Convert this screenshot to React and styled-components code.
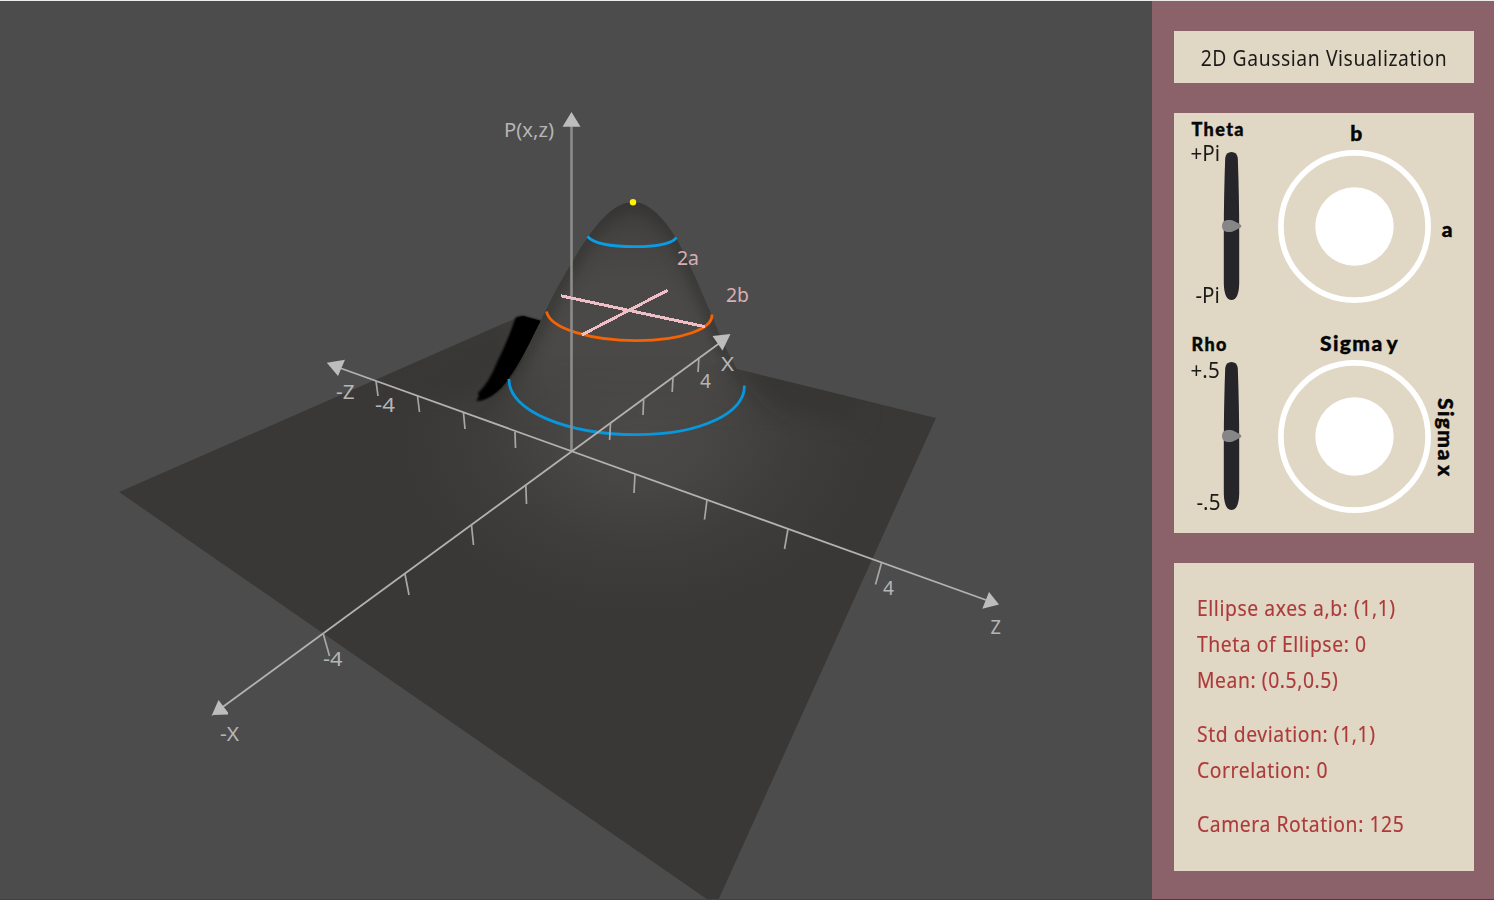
import React from "react";
import styled, { createGlobalStyle } from "styled-components";

const Global = createGlobalStyle`
  * { box-sizing: border-box; }
  body { margin: 0; background: #4c4c4c; overflow: hidden; }
`;

const ink = "#bdbdbd";

const Page = styled.div`
  display: flex;
  width: 1494px;
  height: 900px;
  border-top: 1px solid #ececec;
  border-bottom: 1px solid #454143;
  background: #4c4c4c;
  font-family: "Noto Sans", "Open Sans", sans-serif;
`;

const Viewport = styled.main`
  width: 1152px;
  height: 898px;
`;

const Scene = styled.svg`
  display: block;
  text {
    font-family: "Noto Sans", "Open Sans", sans-serif;
    font-size: 20.5px;
  }
`;

const Sidebar = styled.aside`
  width: 342px;
  height: 898px;
  padding: 30px 19.6px 0 22.4px;
  display: flex;
  flex-direction: column;
  gap: 30px;
  background: #8b626a;
`;

const Panel = styled.section`
  width: 300px;
  flex: none;
  background: #e0d8c5;
`;

const TitlePanel = styled(Panel)`
  height: 52px;
  padding-top: 2px;
  display: flex;
  align-items: center;
  justify-content: center;
`;

const Condensed = styled.span`
  display: block;
  flex: none;
  white-space: nowrap;
  font-size: 21px;
  font-weight: 400;
  line-height: 36px;
  letter-spacing: 0.62px;
  transform: scaleX(0.92);
  transform-origin: left center;
`;

const Title = styled(Condensed)`
  margin: 0;
  color: #1c1a18;
  transform-origin: center;
`;

const ControlsPanel = styled(Panel)`
  height: 420px;
`;

const Control = styled.div`
  height: 210px;
  padding-left: 16.6px;
  display: flex;
`;

const SliderGroup = styled.div`
  width: 87.5px;
  flex: none;
`;

const Name = styled.div`
  height: ${(p) => 39 - p.$top}px;
  margin-top: ${(p) => p.$top}px;
  padding-left: 0.5px;
  font: 900 18px/18px Lato, sans-serif;
  letter-spacing: 1.4px;
  -webkit-text-stroke: 0.4px;
  white-space: nowrap;
  color: #080808;
`;

const SliderBody = styled.div`
  display: flex;
  height: 148px;
`;

const Limits = styled.div`
  width: 30px;
  flex: none;
  height: ${(p) => 148 + p.$above + p.$below}px;
  margin-top: ${(p) => -p.$above}px;
  padding-right: 1px;
  display: flex;
  flex-direction: column;
  justify-content: space-between;
  align-items: flex-end;
`;

const Limit = styled(Condensed)`
  line-height: 20px;
  letter-spacing: 0;
  transform: scaleX(0.98);
  transform-origin: right center;
  color: #1c1a18;
`;

const DialGroup = styled.div`
  width: 153px;
  flex: none;
`;

const DialName = styled.div`
  height: 36.5px;
  padding: 8.5px 0 0 ${(p) => p.$shift}px;
  text-align: center;
  font: 900 21px/21px Lato, sans-serif;
  letter-spacing: 1.4px;
  word-spacing: -3px;
  -webkit-text-stroke: 0.4px;
  white-space: nowrap;
  color: #050505;
`;

const SideName = styled.div`
  flex: 1;
  height: 153px;
  margin-top: ${(p) => p.$top}px;
  padding-right: ${(p) => p.$right}px;
  display: flex;
  align-items: center;
  writing-mode: ${(p) => (p.$vertical ? "vertical-rl" : "horizontal-tb")};
  justify-content: ${(p) => (p.$vertical ? "center" : "flex-end")};
  font: 900 21px/21px Lato, sans-serif;
  letter-spacing: ${(p) => (p.$vertical ? 1.4 : 0)}px;
  word-spacing: -3px;
  -webkit-text-stroke: 0.4px;
  white-space: nowrap;
  color: #050505;
`;

const InfoPanel = styled(Panel)`
  height: 308px;
  padding: 27px 0 0 22.6px;
`;

const Group = styled.div`
  margin-bottom: 18px;
`;

const Reading = styled(Condensed)`
  width: max-content;
  -webkit-text-stroke: 0.15px;
  color: #ad3a3b;
`;

function Slider() {
  return (
    <svg width="22" height="148" viewBox="0 0 22 148">
      <path d="M4.2 6 Q5 0 10.5 0 Q16 0 16.8 6 Q18.2 45 18.2 80 V132 Q17.6 148 10.5 148 Q3.4 148 2.8 132 V80 Q2.8 45 4.2 6Z" fill="#26252a" />
      <path d="M1 74 C1 69.5 4 68 8 68 C13 68 14 70 18 71.5 Q20.5 73 20.5 74 Q20.5 75 18 76.5 C14 78 13 80 8 80 C4 80 1 78.5 1 74Z" fill="#868686" />
    </svg>
  );
}

function Dial() {
  return (
    <svg width="153" height="153" viewBox="0 0 153 153" display="block">
      <circle cx="76.5" cy="76.5" r="73.6" fill="none" stroke="#fff" strokeWidth="5.7" />
      <circle cx="76.5" cy="76.5" r="39.2" fill="#fff" />
    </svg>
  );
}

const labels = [
  [504, 137, "P(x,z)", 50],
  [336, 398.5, "-Z", 18.5],
  [375, 411.5, "-4", 20],
  [220, 740.5, "-X", 19],
  [323, 665.5, "-4", 19.5],
  [721, 371, "X", 13],
  [700, 387.5, "4", 11],
  [883, 594.5, "4", 11],
  [990.5, 633.5, "Z", 10.5],
];

const ticks = [
  [376, 381, 378, 396], [417.5, 396, 419.5, 412], [463.5, 413, 465, 429], [515, 432, 515.5, 448],
  [635, 474, 634, 493], [707, 500, 704.5, 519.5], [788, 529, 784.5, 549], [881.5, 563, 875.5, 584.5],
  [699, 357, 698, 372], [673, 377, 672.2, 392], [643.7, 398, 643, 415], [610.5, 423, 609.6, 440],
  [525.8, 484, 526.5, 504], [471.5, 525, 473.5, 545], [405, 574, 409, 595], [323, 633, 329.5, 656],
];

const arrows = [
  "571.5,112 562.5,126.7 580.5,126.7",
  "712.5,336 730.5,334 722.5,350.5",
  "326.8,362.7 345,359.8 338,376",
  "218.5,700 211.3,716.5 213,715 228,714.5 228,712.5",
  "989,592 999,604.5 982.3,608.7",
];

const plane = "M119 492 L513 319.5 L521 317 L541 321 L737 369 L936 418 L717 903 L711 902Z";
const bell =
  "M633 202 C650 202 665 220 676 238 C687 257 701 290 712 316 C722 341 731 360 744 381 C752 396 765 408 778 416 C800 430 850 470 860 490 L860 620 H400 V490 C430 450 480 412 502 387 C519 366 527 348 540 322 C548 306 560 280 572 263 C577 252 584 243 588 237 C602 217 617 202 633 202Z";

function GaussianScene() {
  return (
    <Scene width="1152" height="898" viewBox="0 1 1152 898">
      <defs>
        <radialGradient id="ground" gradientUnits="userSpaceOnUse" cx="0" cy="0" r="1" gradientTransform="translate(638 430) scale(240 185)">
          <stop offset="0" stopColor="#4b4a48" />
          <stop offset="0.3" stopColor="#474644" />
          <stop offset="0.65" stopColor="#3e3d3b" />
          <stop offset="1" stopColor="#393836" />
        </radialGradient>
        <radialGradient id="body" gradientUnits="userSpaceOnUse" cx="0" cy="0" r="1" gradientTransform="translate(630 375) scale(150 176)">
          <stop offset="0" stopColor="#4a4947" />
          <stop offset="0.55" stopColor="#4a4947" />
          <stop offset="0.8" stopColor="#444341" />
          <stop offset="1" stopColor="#3b3a38" />
        </radialGradient>
        <linearGradient id="fade" gradientUnits="userSpaceOnUse" x1="0" y1="350" x2="0" y2="430">
          <stop offset="0" stopColor="#fff" />
          <stop offset="1" stopColor="#000" />
        </linearGradient>
        <mask id="upper" maskUnits="userSpaceOnUse" x="0" y="0" width="1152" height="900">
          <rect width="1152" height="900" fill="url(#fade)" />
        </mask>
        <filter id="soft" x="-40%" y="-40%" width="180%" height="180%" colorInterpolationFilters="sRGB">
          <feGaussianBlur stdDeviation="9" />
        </filter>
        <filter id="rim" x="-20%" y="-20%" width="140%" height="140%" colorInterpolationFilters="sRGB">
          <feGaussianBlur stdDeviation="6" />
        </filter>
        <filter id="edge" x="-20%" y="-20%" width="140%" height="140%">
          <feGaussianBlur stdDeviation="0.8" />
        </filter>
        <clipPath id="planeClip"><path d={plane} /></clipPath>
        <clipPath id="bellClip"><path d={bell} /></clipPath>
      </defs>

      <rect y="0" width="1152" height="900" fill="#4c4c4c" />
      <path d={plane} fill="url(#ground)" />
      <g clipPath="url(#planeClip)">
        <path d="M725 345 L752 385 Q764 402 785 412 L860 425 L860 390 Z" fill="#373634" filter="url(#soft)" />
        <path d="M500 325 L450 350 L400 395 L470 395 L510 370 Z" fill="#383735" filter="url(#soft)" />
      </g>
      <path d="M516 317 L523 316 L541 321 L530 346 Q514 375 503 387 Q487 402 476 401 Q480 397 478 393 Q489 383 498 360 Q508 340 514 322Z" fill="#000" filter="url(#edge)" />
      <path d="M517 318 L523 316 L541 321 L529 347 Q514 375 502 387 Q489 398 482 399 Q491 384 500 361Z" fill="#000" />
      <g mask="url(#upper)">
        <g clipPath="url(#bellClip)">
          <path d={bell} fill="url(#body)" />
          <path d={bell} fill="none" stroke="#302f2d" strokeOpacity="0.55" strokeWidth="16" filter="url(#rim)" />
        </g>
      </g>

      <g fill="none" strokeWidth="2.8">
        <path d="M587.5 236.5 C594 244 614 246.7 635 246.7 C654 246.7 672 244 676.5 237.5" stroke="#089de6" />
        <path d="M546.5 311.5 C550 329 592 340.6 637 340.6 C681 340.6 713 329 712 314.5" stroke="#f56303" />
        <path d="M509 379 C508 411 568 434.7 637 434.7 C702 434.7 746 412 744.3 385.5" stroke="#0897dc" />
      </g>
      <circle cx="633" cy="202.2" r="3.2" fill="#fff200" />

      <line x1="571.5" y1="125" x2="571.5" y2="451" stroke="#8c8c8b" strokeWidth="2.6" />
      <g stroke="#b4b2b0" strokeWidth="1.8">
        <line x1="340" y1="368" x2="986" y2="600" />
        <line x1="222" y1="707.5" x2="719" y2="343.5" />
      </g>
      <g stroke="#a9a7a5" strokeWidth="1.7">
        {ticks.map(([x1, y1, x2, y2]) => (
          <line key={`${x1}-${y1}`} x1={x1} y1={y1} x2={x2} y2={y2} />
        ))}
      </g>
      {arrows.map((points) => (
        <polygon key={points} points={points} fill={ink} />
      ))}
      <g stroke="#efbfc7" strokeWidth="3" shapeRendering="crispEdges">
        <line x1="561" y1="295.8" x2="705" y2="326.7" />
        <line x1="582" y1="334.8" x2="667.5" y2="290.3" />
      </g>
      {labels.map(([x, y, label, width]) => (
        <text key={`${x}-${y}`} x={x} y={y} textLength={width} lengthAdjust="spacingAndGlyphs" fill="#b5b5b5">{label}</text>
      ))}
      <g fill="#d8adb5">
        <text x="677" y="264.5" textLength="22" lengthAdjust="spacingAndGlyphs">2a</text>
        <text x="726" y="302" textLength="23" lengthAdjust="spacingAndGlyphs">2b</text>
      </g>
    </Scene>
  );
}

const readings = [
  ["Ellipse axes a,b: (1,1)", "Theta of Ellipse: 0", "Mean: (0.5,0.5)"],
  ["Std deviation: (1,1)", "Correlation: 0"],
  ["Camera Rotation: 125"],
];

export default function App() {
  return (
    <Page>
      <Global />
      <Viewport>
        <GaussianScene />
      </Viewport>
      <Sidebar>
        <TitlePanel>
          <Title as="h1">2D Gaussian Visualization</Title>
        </TitlePanel>
        <ControlsPanel>
          <Control>
            <SliderGroup>
              <Name $top={7}>Theta</Name>
              <SliderBody>
                <Limits $above={9} $below={5}>
                  <Limit>+Pi</Limit>
                  <Limit>-Pi</Limit>
                </Limits>
                <Slider />
              </SliderBody>
            </SliderGroup>
            <DialGroup>
              <DialName $shift={4}>b</DialName>
              <Dial />
            </DialGroup>
            <SideName $top={39} $right={22}>a</SideName>
          </Control>
          <Control>
            <SliderGroup>
              <Name $top={12}>Rho</Name>
              <SliderBody>
                <Limits $above={2} $below={2}>
                  <Limit>+.5</Limit>
                  <Limit>-.5</Limit>
                </Limits>
                <Slider />
              </SliderBody>
            </SliderGroup>
            <DialGroup>
              <DialName $shift={9}>Sigma y</DialName>
              <Dial />
            </DialGroup>
            <SideName $top={38} $right={13} $vertical>Sigma x</SideName>
          </Control>
        </ControlsPanel>
        <InfoPanel>
          {readings.map((group) => (
            <Group key={group[0]}>
              {group.map((line) => (
                <Reading key={line}>{line}</Reading>
              ))}
            </Group>
          ))}
        </InfoPanel>
      </Sidebar>
    </Page>
  );
}
